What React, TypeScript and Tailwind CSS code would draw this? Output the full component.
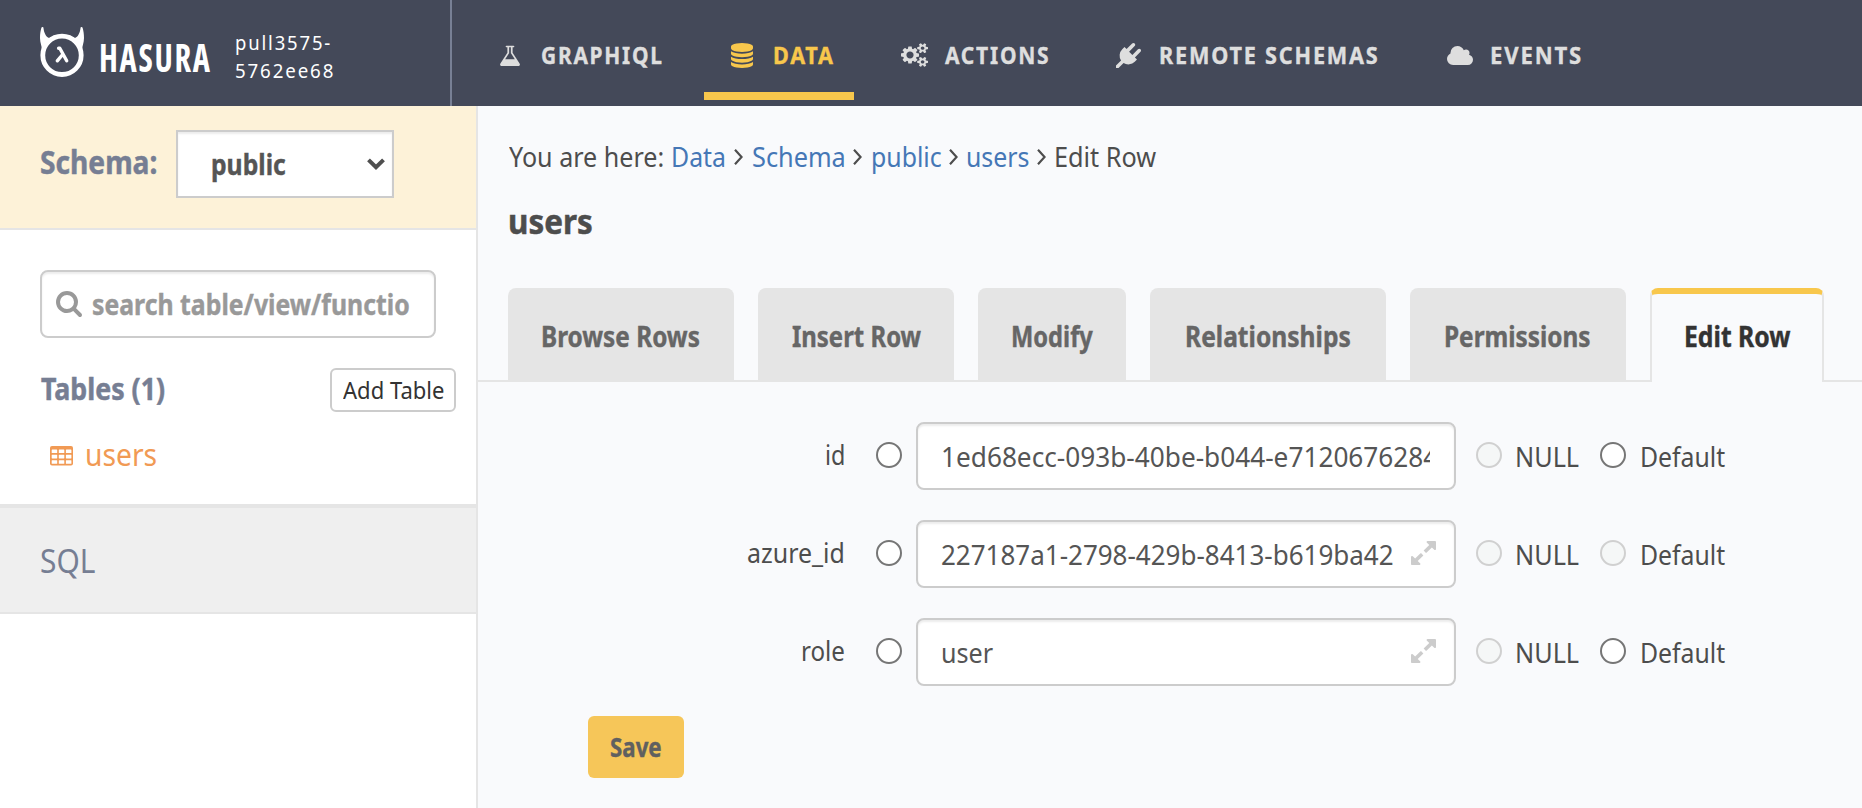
import React, { useLayoutEffect, useRef, useState } from "react";

/* Text run condensed horizontally so that it fills the width given by its class. */
function T({ children, className = "" }: { children: string; className?: string }) {
  const outer = useRef<HTMLSpanElement>(null);
  const inner = useRef<HTMLSpanElement>(null);
  const [scale, setScale] = useState(1);
  useLayoutEffect(() => {
    if (outer.current && inner.current && inner.current.offsetWidth) {
      setScale((outer.current.getBoundingClientRect().width - 2) / inner.current.offsetWidth);
    }
  }, [children]);
  return (
    <span ref={outer} className={`flex shrink-0 whitespace-pre pl-px leading-none ${className}`}>
      <span ref={inner} className="block shrink-0 origin-left" style={{ transform: `scaleX(${scale})` }}>
        {children}
      </span>
    </span>
  );
}

function Icon({ box, d, className }: { box: string; d: string; className: string }) {
  return (
    <svg viewBox={box} preserveAspectRatio="none" fill="currentColor" className={`shrink-0 ${className}`}>
      <path d={d} />
    </svg>
  );
}

const FLASK =
  "M1527 1497q56 89 21.5 152t-140.5 63h-1152q-106 0-140.5-63t21.5-152l503-793v-399h-64q-26 0-45-19t-19-45 19-45 45-19h512q26 0 45 19t19 45-19 45-45 19h-64v399zm-779-725l-272 428h712l-272-428-20-31v-436h-128v436z";
const DATABASE =
  "M832 768q237 0 443-43t325-127v170q0 69-103 128t-280 93.5-385 34.5-385-34.5-280-93.5-103-128v-170q119 84 325 127t443 43zm0 768q237 0 443-43t325-127v170q0 69-103 128t-280 93.5-385 34.5-385-34.5-280-93.5-103-128v-170q119 84 325 127t443 43zm0-384q237 0 443-43t325-127v170q0 69-103 128t-280 93.5-385 34.5-385-34.5-280-93.5-103-128v-170q119 84 325 127t443 43zm0-1152q208 0 385 34.5t280 93.5 103 128v128q0 69-103 128t-280 93.5-385 34.5-385-34.5-280-93.5-103-128v-128q0-69 103-128t280-93.5 385-34.5z";
const COGS =
  "M896 896q0-106-75-181t-181-75-181 75-75 181 75 181 181 75 181-75 75-181zm768 512q0-52-38-90t-90-38-90 38-38 90q0 53 37.5 90.5t90.5 37.5 90.5-37.5 37.5-90.5zm0-1024q0-52-38-90t-90-38-90 38-38 90q0 53 37.5 90.5t90.5 37.5 90.5-37.5 37.5-90.5zm-384 421v185q0 10-7 19.5t-16 10.5l-155 24q-11 35-32 76 34 48 90 115 7 11 7 20 0 12-7 19-23 30-82.5 89.5t-78.5 59.5q-11 0-21-7l-115-90q-37 19-77 31-11 108-23 155-7 24-30 24h-186q-11 0-20-7.5t-10-17.5l-23-153q-34-10-75-31l-118 89q-7 7-20 7-11 0-21-8-144-133-144-160 0-9 7-19 10-14 41-53t47-61q-23-44-35-82l-152-24q-10-1-17-9.5t-7-19.5v-185q0-10 7-19.5t16-10.5l155-24q11-35 32-76-34-48-90-115-7-11-7-20 0-12 7-20 22-30 82-89t79-59q11 0 21 7l115 90q34-18 77-32 11-108 23-154 7-24 30-24h186q11 0 20 7.5t10 17.5l23 153q34 10 75 31l118-89q8-7 20-7 11 0 21 8 144 133 144 160 0 8-7 19-12 16-42 54t-45 60q23 48 34 82l152 23q10 2 17 10.5t7 19.5zm640 533v140q0 16-149 31-12 27-30 52 51 113 51 138 0 4-4 7-122 71-124 71-8 0-46-47t-52-68q-20 2-30 2t-30-2q-14 21-52 68t-46 47q-2 0-124-71-4-3-4-7 0-25 51-138-18-25-30-52-149-15-149-31v-140q0-16 149-31 13-29 30-52-51-113-51-138 0-4 4-7 4-2 35-20t59-34 30-16q8 0 46 46.5t52 67.5q20-2 30-2t30 2q51-71 92-112l6-2q4 0 124 70 4 3 4 7 0 25-51 138 17 23 30 52 149 15 149 31zm0-1024v140q0 16-149 31-12 27-30 52 51 113 51 138 0 4-4 7-122 71-124 71-8 0-46-47t-52-68q-20 2-30 2t-30-2q-14 21-52 68t-46 47q-2 0-124-71-4-3-4-7 0-25 51-138-18-25-30-52-149-15-149-31v-140q0-16 149-31 13-29 30-52-51-113-51-138 0-4 4-7 4-2 35-20t59-34 30-16q8 0 46 46.5t52 67.5q20-2 30-2t30 2q51-71 92-112l6-2q4 0 124 70 4 3 4 7 0 25-51 138 17 23 30 52 149 15 149 31z";
const PLUG =
  "M1755 453q37 38 37 90.5t-37 90.5l-401 400 150 150-160 160q-163 163-389.5 186.5t-411.5-100.5l-362 362h-181v-181l362-362q-124-185-100.5-411.5t186.5-389.5l160-160 150 150 400-401q38-37 91-37t90 37 37 90.5-37 90.5l-400 401 234 234 401-400q38-37 91-37t90 37z";
const CLOUD =
  "M1984 1152q0 159-112.5 271.5t-271.5 112.5h-1088q-185 0-316.5-131.5t-131.5-316.5q0-132 71-241.5t187-163.5q-2-28-2-43 0-212 150-362t362-150q158 0 286.5 88t187.5 230q70-62 166-62 106 0 181 75t75 181q0 75-41 138 129 30 213 134.5t84 239.5z";
const SEARCH =
  "M1216 832q0-185-131.5-316.5t-316.5-131.5-316.5 131.5-131.5 316.5 131.5 316.5 316.5 131.5 316.5-131.5 131.5-316.5zm512 832q0 52-38 90t-90 38q-54 0-90-38l-343-342q-179 124-399 124-143 0-273.5-55.5t-225-150-150-225-55.5-273.5 55.5-273.5 150-225 225-150 273.5-55.5 273.5 55.5 225 150 150 225 55.5 273.5q0 220-124 399l343 343q37 37 37 90z";
const EXPAND =
  "M883 1056q0 13-10 23l-332 332 144 144q19 19 19 45t-19 45-45 19h-448q-26 0-45-19t-19-45v-448q0-26 19-45t45-19 45 19l144 144 332-332q10-10 23-10t23 10l114 114q10 10 10 23zm781-864v448q0 26-19 45t-45 19-45-19l-144-144-332 332q-10 10-23 10t-23-10l-114-114q-10-10-10-23t10-23l332-332-144-144q-19-19-19-45t19-45 45-19h448q26 0 45 19t19 45z";

function Logo() {
  return (
    <svg viewBox="0 0 44 50" fill="none" className="h-[50px] w-11 shrink-0">
      <circle cx="22" cy="28.3" r="19.2" stroke="#fff" strokeWidth="4.8" />
      <g fill="#fff">
        <path d="M3.4.5C3.9 5.5 6 10.3 9.2 10.9 11 10.7 12.5 9.5 15 8L12 14 2 24C2 19 0 16 0 11 0 7 .6 3.500 1.500.6 2-.2 3.200-.2 3.400.5Z" />
        <path d="M40.6.5C40.1 5.5 38 10.3 34.8 10.9 33 10.7 31.500 9.500 29 8L32 14 42 24C42 19 44 16 44 11 44 7 43.400 3.500 42.500.6 42-.2 40.800-.2 40.600.5Z" />
      </g>
      <path d="M18.600 21.300H19.800L26.700 33.800M22.200 28 17.300 33.800" stroke="#fff" strokeWidth="3.400" strokeLinecap="round" strokeLinejoin="round" />
    </svg>
  );
}

function TableIcon() {
  return (
    <svg viewBox="0 0 23 20" className="ml-[50px] h-5 w-[23px] shrink-0">
      <rect width="23" height="19.500" rx="2" fill="#f19a54" />
      <g fill="#fff">
        <rect x="1.700" y="3.500" width="5.500" height="3.600" rx=".4" />
        <rect x="8.800" y="3.500" width="5.500" height="3.600" rx=".4" />
        <rect x="15.900" y="3.500" width="5.500" height="3.600" rx=".4" />
        <rect x="1.700" y="8.700" width="5.500" height="3.800" rx=".4" />
        <rect x="8.800" y="8.700" width="5.500" height="3.800" rx=".4" />
        <rect x="15.900" y="8.700" width="5.500" height="3.800" rx=".4" />
        <rect x="1.700" y="14.200" width="5.500" height="3.600" rx=".4" />
        <rect x="8.800" y="14.200" width="5.500" height="3.600" rx=".4" />
        <rect x="15.900" y="14.200" width="5.500" height="3.600" rx=".4" />
      </g>
    </svg>
  );
}

function Header() {
  return (
    <header className="flex h-[106px] shrink-0 bg-[#444959] text-white">
      <div className="flex w-[452px] shrink-0 border-r-2 border-[#788095] pl-10">
        <div className="pt-[27px]">
          <Logo />
        </div>
        <T className="ml-[14px] w-[115px] pt-[37px] font-['Open_Sans'] text-[39px] font-bold tracking-[2px] [font-stretch:75%]">HASURA</T>
        <div className="ml-[21px] flex flex-col gap-2 pt-[33px] text-[20px] tracking-[2px]">
          <T className="w-[99px]">pull3575-</T>
          <T className="w-[102px]">5762ee68</T>
        </div>
      </div>
      <nav className="flex text-[24px] font-bold tracking-[2px] text-[#dedede] [-webkit-text-stroke:0.4px]">
        <a className="flex h-[100px] items-center pb-[8px] pt-[18px]">
          <Icon box="96 128 1472 1584" d={FLASK} className="ml-12 h-[21px] w-5" />
          <T className="ml-5 w-[125px]">GRAPHIQL</T>
        </a>
        <a className="ml-[39px] flex h-[100px] w-[150px] items-center border-b-8 border-[#f8c74c] pt-[18px] text-[#f8c74c]">
          <Icon box="64 0 1536 1792" d={DATABASE} className="ml-[27px] h-[25px] w-[22px]" />
          <T className="ml-[19px] w-[64px]">DATA</T>
        </a>
        <a className="ml-[47px] flex h-[100px] items-center pb-2 pt-[18px]">
          <Icon box="0 0 1920 1792" d={COGS} className="h-6 w-[27px]" />
          <T className="ml-4 w-[107px]">ACTIONS</T>
        </a>
        <a className="ml-[65px] flex h-[100px] items-center pb-2 pt-[18px]">
          <Icon box="0 0 1792 1792" d={PLUG} className="h-[25px] w-[25px]" />
          <T className="ml-[17px] w-[223px]">REMOTE SCHEMAS</T>
        </a>
        <a className="ml-[66px] flex h-[100px] items-center pb-2 pt-[18px]">
          <Icon box="64 128 1920 1408" d={CLOUD} className="h-[19px] w-[26px]" />
          <T className="ml-4 w-[95px]">EVENTS</T>
        </a>
      </nav>
    </header>
  );
}

function Sidebar() {
  return (
    <aside className="flex w-[478px] shrink-0 flex-col border-r-2 border-[#e5e5e5] bg-white">
      <div className="flex h-[124px] border-b-2 border-[#e5e5e5] bg-[#fdf2d8] pl-[39px] pt-6">
        <T className="h-[64px] w-[119px] items-center text-[32px] font-bold text-[#767e93] [-webkit-text-stroke:0.5px]">Schema:</T>
        <div className="ml-[18px] flex h-[68px] w-[218px] items-center border-2 border-[#ccc] bg-white pl-8 shadow-[inset_0_2px_2px_rgba(0,0,0,0.075)]">
          <T className="w-[77px] text-[28px] font-bold text-[#555] [-webkit-text-stroke:0.4px]">public</T>
          <svg viewBox="0 0 18 12" className="ml-[80px] h-3 w-[18px] shrink-0">
            <path d="M1.500 1.800 9 9.200l7.500-7.400" fill="none" stroke="#4f4f4f" strokeWidth="4" />
          </svg>
        </div>
      </div>
      <div className="ml-10 mt-10 flex h-[68px] w-[396px] items-center rounded-lg border-2 border-[#ccc] pl-[14px] shadow-[inset_0_2px_2px_rgba(0,0,0,0.075)]">
        <Icon box="64 128 1664 1664" d={SEARCH} className="h-[26px] w-[26px] text-[#999]" />
        <div className="ml-[9px] w-[319px] overflow-hidden py-2">
          <T className="w-[336px] text-[28px] font-bold text-[#999] [-webkit-text-stroke:0.4px]">search table/view/function</T>
        </div>
      </div>
      <div className="mt-[30px] flex h-11 items-center pl-10">
        <T className="mb-[2px] w-[126px] text-[30px] font-bold text-[#767e93] [-webkit-text-stroke:0.5px]">Tables (1)</T>
        <div className="ml-[164px] flex h-11 w-[126px] items-center rounded-md border-2 border-[#ccc] pl-[10px]">
          <T className="w-[103px] text-[24px] text-[#333]">Add Table</T>
        </div>
      </div>
      <div className="mt-[24px] flex h-[38px] items-center">
        <div className="mt-0.5">
          <TableIcon />
        </div>
        <T className="mb-0.5 ml-[11px] w-[74px] text-[31px] text-[#f19a54]">users</T>
      </div>
      <div className="mt-[30px] flex h-[110px] items-center border-y-2 border-t-4 border-[#e5e5e5] bg-[#efefef] pl-[39px]">
        <T className="mt-0.5 w-[57px] text-[32px] text-[#767e93]">SQL</T>
      </div>
    </aside>
  );
}

function Chevron({ className }: { className: string }) {
  return (
    <svg viewBox="0 0 9 16" className={`mt-0.5 h-4 w-[9px] shrink-0 ${className}`}>
      <path d="M1 .8 7.600 8 1 15.200" fill="none" stroke="#4d4d4d" strokeWidth="2.200" />
    </svg>
  );
}

function Radio({ disabled = false, className = "" }: { disabled?: boolean; className?: string }) {
  return (
    <span
      className={`mb-0.5 h-[26px] w-[26px] shrink-0 rounded-full border-2 ${
        disabled ? "border-[#d0d0d0] bg-[#f5f7f7]" : "border-[#767676] bg-white"
      } ${className}`}
    />
  );
}

type Field = { label: string; labelW: string; value: string; valueW: string; expand: boolean; defaultOff: boolean };

const FIELDS: Field[] = [
  { label: "id", labelW: "w-[22px]", value: "1ed68ecc-093b-40be-b044-e7120676284", valueW: "w-[499px]", expand: false, defaultOff: false },
  { label: "azure_id", labelW: "w-[100px]", value: "227187a1-2798-429b-8413-b619ba42", valueW: "w-[455px]", expand: true, defaultOff: true },
  { label: "role", labelW: "w-[46px]", value: "user", valueW: "w-[54px]", expand: true, defaultOff: false },
];

function FieldRow({ f }: { f: Field }) {
  return (
    <div className="flex h-[68px] items-center text-[28px] text-[#4d4d4d]">
      <div className="mb-[5px] flex w-[368px] shrink-0 justify-end">
        <T className={f.labelW}>{f.label}</T>
      </div>
      <Radio className="ml-[30px]" />
      <div className="ml-[14px] flex h-[68px] w-[540px] shrink-0 items-center rounded-lg border-2 border-[#ccc] bg-white pl-[22px] text-[#555] shadow-[inset_0_2px_2px_rgba(0,0,0,0.075)]">
        <div className="w-[490px] shrink-0 overflow-hidden py-2">
          <T className={f.valueW}>{f.value}</T>
        </div>
        {f.expand && <Icon box="128 128 1536 1536" d={EXPAND} className="-ml-[19px] mb-1 mt-0.5 h-6 w-[25px] text-[#ccc]" />}
      </div>
      <Radio disabled className="ml-5" />
      <T className="ml-3 w-[66px]">NULL</T>
      <Radio disabled={f.defaultOff} className="ml-5" />
      <T className="ml-[13px] w-[87px]">Default</T>
    </div>
  );
}

const TABS = [
  { name: "Browse Rows", tab: "w-[226px] pl-8", text: "w-[161px]" },
  { name: "Insert Row", tab: "w-[196px] pl-[33px]", text: "w-[131px]" },
  { name: "Modify", tab: "w-[148px] pl-8", text: "w-[84px]" },
  { name: "Relationships", tab: "w-[236px] pl-[34px]", text: "w-[168px]" },
  { name: "Permissions", tab: "w-[216px] pl-[33px]", text: "w-[149px]" },
];

function Main() {
  return (
    <main className="flex min-w-0 flex-1 flex-col overflow-hidden bg-[#f9fafc]">
      <div className="ml-[30px] mt-[33px] flex h-[34px] items-center text-[28px] text-[#4577b6]">
        <T className="w-[157px] text-[#4d4d4d]">You are here:</T>
        <T className="ml-[5px] w-[57px]">Data</T>
        <Chevron className="ml-[7px]" />
        <T className="ml-2 w-[96px]">Schema</T>
        <Chevron className="ml-[6px]" />
        <T className="ml-2 w-[73px]">public</T>
        <Chevron className="ml-[6px]" />
        <T className="ml-[7px] w-[65px]">users</T>
        <Chevron className="ml-[7px]" />
        <T className="ml-[7px] w-[104px] text-[#4d4d4d]">Edit Row</T>
      </div>
      <div className="ml-[29px] mt-[28px] flex h-10 items-center">
        <T className="w-[87px] text-[34px] font-bold text-[#4d4d4d] [-webkit-text-stroke:0.5px]">users</T>
      </div>
      <div className="mt-[47px] flex h-[94px] shrink-0 text-[28px] font-bold text-[#666] [-webkit-text-stroke:0.4px]">
        <div className="w-[30px] border-b-2 border-[#e5e5e5]" />
        {TABS.map((t) => (
          <React.Fragment key={t.name}>
            <div className={`flex shrink-0 items-center rounded-t-lg border-b-2 border-[#e5e5e5] bg-[#e5e5e5] pt-1 ${t.tab}`}>
              <T className={t.text}>{t.name}</T>
            </div>
            <div className="w-6 shrink-0 border-b-2 border-[#e5e5e5]" />
          </React.Fragment>
        ))}
        <div className="flex w-[174px] shrink-0 items-center rounded-t-lg border-x-2 border-t-[6px] border-x-[#e5e5e5] border-t-[#f8c74c] pb-[4px] pl-[31px] text-[#333]">
          <T className="w-[108px]">Edit Row</T>
        </div>
        <div className="flex-1 border-b-2 border-[#e5e5e5]" />
      </div>
      <div className="mt-10 flex flex-col gap-[30px]">
        {FIELDS.map((f) => (
          <FieldRow key={f.label} f={f} />
        ))}
      </div>
      <div className="ml-[110px] mt-[30px] flex h-[62px] w-24 shrink-0 items-center rounded-md bg-[#f6c659] pb-0.5 pl-[21px] text-[27px] font-bold text-[#606060] [-webkit-text-stroke:0.4px]">
        <T className="w-[54px]">Save</T>
      </div>
    </main>
  );
}

export default function App() {
  return (
    <div className="flex h-[808px] w-[1862px] flex-col overflow-hidden font-['Noto_Sans',sans-serif]">
      <Header />
      <div className="flex min-h-0 flex-1">
        <Sidebar />
        <Main />
      </div>
    </div>
  );
}
